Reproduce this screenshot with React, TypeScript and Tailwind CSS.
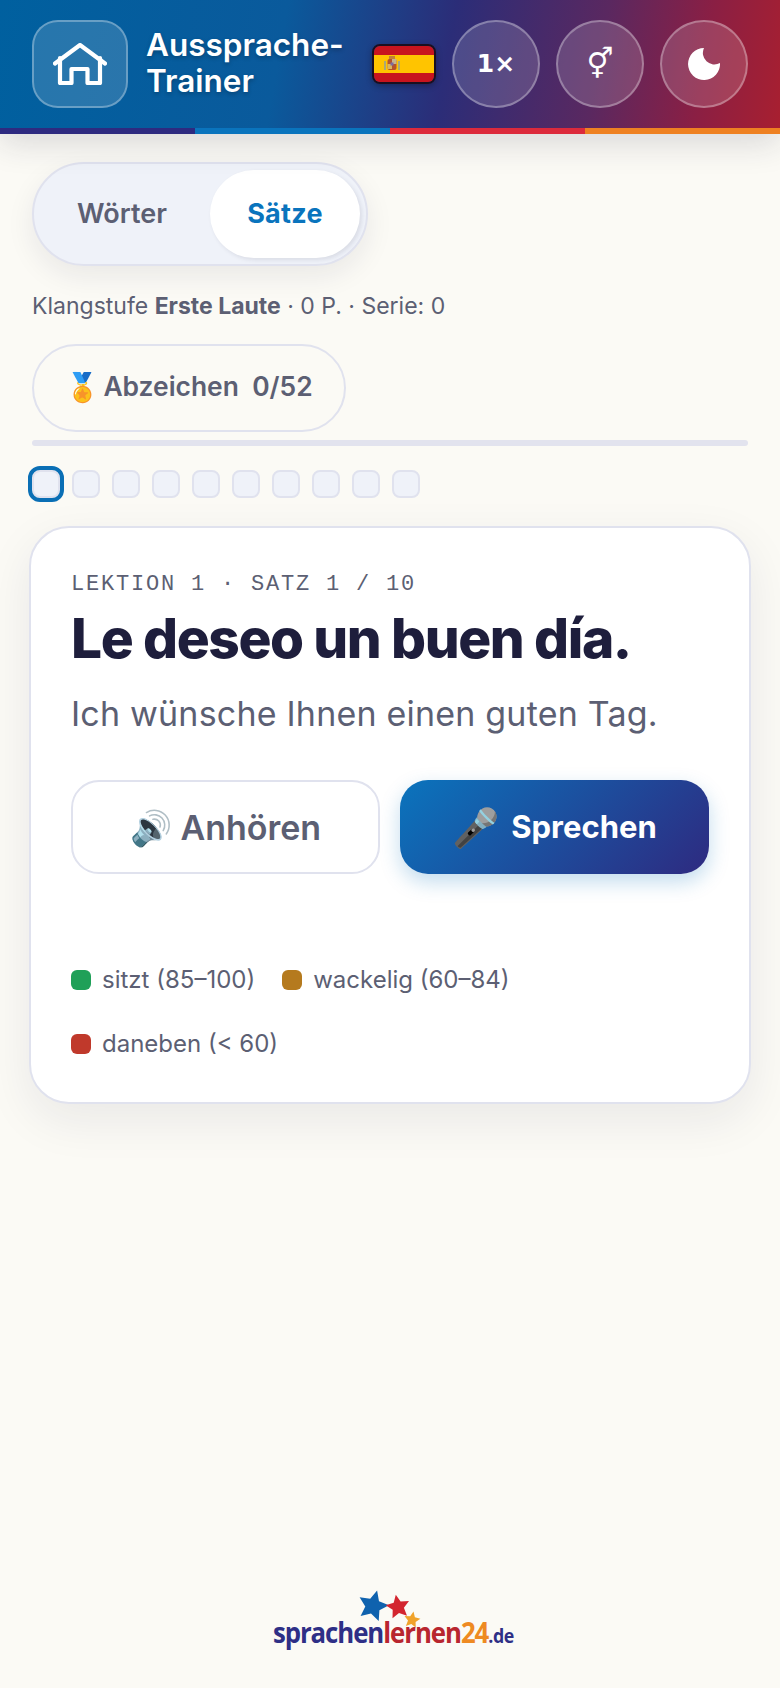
import React from 'react';

const inter = "font-['Inter','Noto_Sans',sans-serif]";

const Star = ({ cx, cy, r, rot, fill }: { cx: number; cy: number; r: number; rot: number; fill: string }) => {
  const pts: string[] = [];
  for (let i = 0; i < 10; i++) {
    const rad = i % 2 === 0 ? r : r * 0.48;
    const a = ((-90 + rot + i * 36) * Math.PI) / 180;
    pts.push(`${(cx + rad * Math.cos(a)).toFixed(1)},${(cy + rad * Math.sin(a)).toFixed(1)}`);
  }
  return <polygon points={pts.join(' ')} fill={fill} />;
};

const Legend = ({ color, label }: { color: string; label: string }) => (
  <div className="flex items-center gap-[11px]">
    <span className={`w-5 h-5 rounded-md ${color}`} />
    <span className="text-[24px] leading-[36px] text-[#5c5f73]">{label}</span>
  </div>
);

export default function App() {
  const dots = [1, 2, 3, 4, 5, 6, 7, 8, 9];
  return (
    <div className={`min-h-[1688px] flex flex-col bg-[#fbfaf5] ${inter}`}>
      <header className="relative h-[134px] shadow-[0_8px_32px_rgba(30,30,60,0.16)]">
        <div className="h-[128px] flex items-center px-8 bg-[linear-gradient(100deg,#00609f_0%,#0a5a9c_36%,#2b2d78_57%,#5a2860_76%,#8a1f44_89%,#a81f30_100%)]">
          <button className="w-24 h-[88px] shrink-0 flex items-center justify-center rounded-[26px] bg-white/15 border-2 border-white/30">
            <svg width="54" height="42" viewBox="0 0 54 42" fill="none" stroke="white" strokeWidth="4.2" strokeLinecap="round" strokeLinejoin="round">
              <path d="M2 20.5 27 2l25 18.5" />
              <path d="M7 15v25h11.5V26h16v14H47V15" />
            </svg>
          </button>
          <div className="ml-[18px] mb-[2px] w-[210px] text-[31.5px] leading-[36px] font-semibold text-white [text-shadow:0_2px_4px_rgba(0,0,0,0.25)]">
            Aussprache-
            <br />
            Trainer
          </div>
          <div className="ml-[16px] w-16 h-10 rounded-lg border-2 border-[#1a1020] overflow-hidden flex flex-col shadow-[0_2px_6px_rgba(0,0,0,0.3)]">
            <div className="h-[9px] bg-[#c8141e]" />
            <div className="flex-1 bg-[#ffc400] flex items-center pl-[10px]">
              <svg width="16" height="16" viewBox="0 0 16 16">
                <rect x="0" y="5" width="2" height="9" fill="#a9a878" />
                <rect x="14" y="5" width="2" height="9" fill="#a9a878" />
                <rect x="5" y="0" width="6" height="3" fill="#c0803a" />
                <rect x="3.5" y="3" width="9" height="11" rx="2" fill="#b5532a" />
                <rect x="8" y="3" width="4.5" height="5" fill="#c9b48a" />
                <rect x="3.5" y="8" width="4.5" height="5" fill="#d8b45c" />
                <rect x="6.5" y="6.5" width="3" height="3" fill="#7a6aa0" />
              </svg>
            </div>
            <div className="h-[9px] bg-[#c8141e]" />
          </div>
          <div className="ml-auto flex gap-4">
            <button className="w-[88px] h-[88px] rounded-full bg-white/15 border-2 border-white/30 text-white text-[25px] font-bold font-['DejaVu_Sans',sans-serif]">
              1×
            </button>
            <button className="w-[88px] h-[88px] rounded-full bg-white/15 border-2 border-white/30 text-white text-[30px] leading-none flex items-center justify-center font-['DejaVu_Sans',sans-serif]">
              ⚥
            </button>
            <button className="w-[88px] h-[88px] rounded-full bg-white/15 border-2 border-white/30 flex items-center justify-center">
              <svg width="32" height="32" viewBox="0 0 32 32">
                <path d="M16 0A16 16 0 1 0 32 15 11.5 11.5 0 0 1 16 0z" fill="white" />
              </svg>
            </button>
          </div>
        </div>
        <div className="h-[6px] grid grid-cols-4">
          <div className="bg-[#2e2a80]" />
          <div className="bg-[#0a74bd]" />
          <div className="bg-[#dc2a3c]" />
          <div className="bg-[#ee8122]" />
        </div>
      </header>

      <main className="flex-1 flex flex-col px-8 pt-7">
        <div className="self-start flex p-[6px] rounded-full bg-[#eff2f9] border-2 border-[#e0e2ee] shadow-[0_10px_28px_rgba(30,30,60,0.08)]">
          <div className="w-[170px] h-[88px] pr-[6px] flex items-center justify-center text-[27px] font-semibold text-[#5c5f73]">Wörter</div>
          <div className="w-[150px] h-[88px] flex items-center justify-center rounded-full bg-white text-[27px] font-bold tracking-[0.3px] text-[#0a74bd] shadow-[2px_2px_4px_rgba(30,30,60,0.1)]">Sätze</div>
        </div>

        <p className="mt-[22px] text-[23px] leading-[36px] text-[#5c5f73]">
          Klangstufe <b className="font-bold">Erste Laute</b> · 0 P. · Serie: 0
        </p>

        <div className="mt-[20px] self-start h-[88px] w-[314px] pb-[3px] flex items-center justify-center rounded-full border-2 border-[#e0e2ee] text-[26.4px] font-semibold text-[#5c5f73]">
          <span className="text-[28px] mr-[3px]">🏅</span>
          <span>Abzeichen&nbsp; 0/52</span>
        </div>

        <div className="mt-2 h-[6px] rounded-full bg-[#e2e3ee]" />

        <div className="mt-6 flex gap-3">
          <span className="w-7 h-7 rounded-lg bg-[#eff2f9] border-2 border-[#e0e2ee] outline-4 outline-offset-0 outline-[#0a6fb5]" />
          {dots.map((d) => (
            <span key={d} className="w-7 h-7 rounded-lg bg-[#eff2f9] border-2 border-[#e0e2ee]" />
          ))}
        </div>

        <section className="-mx-[3px] mt-7 h-[578px] px-10 pt-[42px] rounded-[40px] bg-white border-2 border-[#e0e2ee] shadow-[0_16px_48px_rgba(30,30,60,0.08)]">
          <div className="font-['Liberation_Mono',monospace] text-[22px] leading-[30px] tracking-[1.8px] text-[#5c5f73]">LEKTION 1 · SATZ 1 / 10</div>
          <h1 className="mt-[4px] text-[55px] leading-[68px] font-extrabold tracking-[-1.4px] text-[#1e1e3c]">Le deseo un buen día.</h1>
          <p className="mt-[18px] text-[34px] leading-[48px] tracking-[0.2px] text-[#5c5f73]">Ich wünsche Ihnen einen guten Tag.</p>
          <div className="mt-[42px] grid grid-cols-2 gap-5">
            <button className="h-[94px] rounded-[28px] bg-white border-2 border-[#e0e2ee] text-[34px] font-semibold text-[#5c5f73]">🔊 Anhören</button>
            <button className="h-[94px] flex items-center justify-center gap-[12px] rounded-[28px] bg-[linear-gradient(135deg,#0a74bd,#2e2a80)] text-[31px] font-bold text-white shadow-[0_8px_20px_rgba(10,116,189,0.25)]">
              <span className="text-[38px] leading-none">🎤</span>
              <span>Sprechen</span>
            </button>
          </div>
          <div className="mt-[88px] flex flex-wrap gap-x-[27px] gap-y-[28px]">
            <Legend color="bg-[#1fa058]" label="sitzt (85–100)" />
            <Legend color="bg-[#b57a1e]" label="wackelig (60–84)" />
            <Legend color="bg-[#c0392b]" label="daneben (< 60)" />
          </div>
        </section>

        <footer className="mt-auto mb-[35px] self-center flex flex-col items-center">
          <svg width="70" height="40" viewBox="0 0 70 40" className="-mb-[14px] relative">
            <Star cx={18} cy={17} r={16} rot={15} fill="#0f62ae" />
            <Star cx={43} cy={18} r={12.5} rot={-10} fill="#d3252f" />
            <Star cx={57} cy={31} r={8.5} rot={10} fill="#f0a32a" />
          </svg>
          <div className="ml-[7px] scale-x-[0.89] font-['Open_Sans',sans-serif] font-bold text-[29px] leading-[34px] tracking-[-1.2px] whitespace-nowrap">
            <span className="text-[#2e2f86]">sprachen</span>
            <span className="text-[#b8262f]">lernen</span>
            <span className="text-[#ee8a22]">24</span>
            <span className="text-[#2e2f86] text-[20px] tracking-[-0.5px]">.de</span>
          </div>
        </footer>
      </main>
    </div>
  );
}
